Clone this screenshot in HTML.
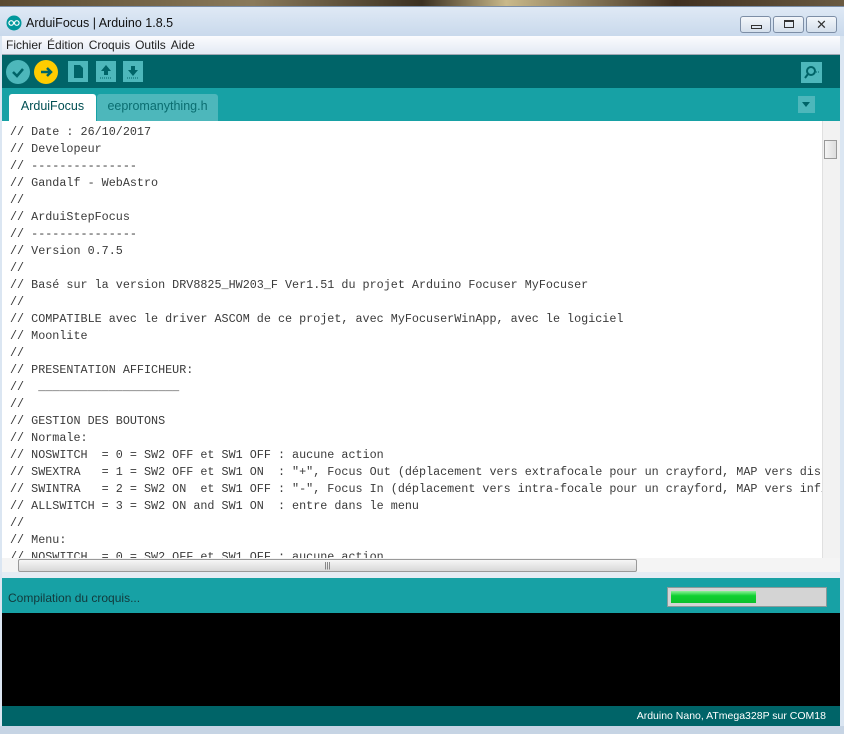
<!DOCTYPE html>
<html><head><meta charset="utf-8"><style>
*{margin:0;padding:0;box-sizing:border-box}
body{width:844px;height:734px;overflow:hidden;background:#dbe6f2;font-family:"Liberation Sans",sans-serif;position:relative}
.abs{position:absolute}
#desk{left:0;top:0;width:844px;height:6px;background:linear-gradient(90deg,#5a4a30,#8a7a5a 30%,#3b3020 50%,#c9b98a 60%,#403020 80%,#6a5a40)}
#title{left:0;top:6px;width:844px;height:30px;background:linear-gradient(#dfe9f5,#c9d9ec);border-top:1px solid #7a8ea8}
#title .t{left:26px;top:9px;font-size:12.5px;color:#111}
.wb{top:9px;height:17px;border:1px solid #7d8ea6;border-radius:3px;background:linear-gradient(#f4f7fb,#d4dfec)}
#menu{left:2px;top:36px;width:838px;height:19px;background:linear-gradient(#fbfcfe,#e3eaf4);border-bottom:1px solid #a0a8b4;font-size:12px;color:#222}
#menu span{margin-left:4px;margin-right:1px;line-height:18px}
#tool{left:2px;top:55px;width:838px;height:33px;background:#006468}
#tabs{left:2px;top:88px;width:838px;height:33px;background:#17a1a5}
#editor{left:2px;top:121px;width:838px;height:451px;background:#fff;overflow:hidden}
pre{position:absolute;left:8px;top:3px;font-family:"Liberation Mono",monospace;font-size:11.75px;line-height:17px;color:#3a3a3a}
#status{left:2px;top:578px;width:838px;height:35px;background:#17a1a5}
#console{left:2px;top:613px;width:838px;height:93px;background:#000}
#board{left:2px;top:706px;width:838px;height:20px;background:#006468;color:#fff;font-size:10.5px;text-align:right;padding-right:14px;line-height:20px}
</style></head><body>
<div class="abs" id="desk"></div>
<div class="abs" id="title">
<svg class="abs" style="left:6px;top:8px" width="16" height="16"><circle cx="8" cy="8" r="7.5" fill="#00979c"/><circle cx="5.2" cy="8" r="2.3" fill="none" stroke="#fff" stroke-width="1.2"/><circle cx="10.8" cy="8" r="2.3" fill="none" stroke="#fff" stroke-width="1.2"/></svg>
<div class="abs t">ArduiFocus | Arduino 1.8.5</div>
<div class="abs wb" style="left:740px;width:31px"><div class="abs" style="left:10px;top:8px;width:11px;height:4px;border:1px solid #333"></div></div>
<div class="abs wb" style="left:773px;width:31px"><div class="abs" style="left:10px;top:3px;width:10px;height:8px;border:1px solid #333;border-top-width:2px"></div></div>
<div class="abs wb" style="left:806px;width:31px;text-align:center;font-size:13px;line-height:15px;color:#333">✕</div>
</div>
<div class="abs" id="menu"><span>Fichier</span><span>Édition</span><span>Croquis</span><span>Outils</span><span>Aide</span></div>
<div class="abs" id="tool">
<svg class="abs" style="left:4px;top:5px" width="140" height="24">
<circle cx="12" cy="12" r="12" fill="#4db7bb"/><path d="M7 12l4 4 6-7" stroke="#006468" stroke-width="2.5" fill="none"/>
<circle cx="40" cy="12" r="12" fill="#ffcc00"/><path d="M35 12h9M41 8l4 4-4 4" stroke="#006468" stroke-width="2.5" fill="none"/>
<rect x="62" y="1" width="20" height="21" fill="#4db7bb"/><path d="M68 5h6l3 3v10h-9z" fill="#006468"/>
<rect x="90" y="1" width="20" height="21" fill="#4db7bb"/><path d="M100 5l-5 6h3v4h4v-4h3z" fill="#006468"/><path d="M94 18h12" stroke="#006468" stroke-dasharray="1 1"/>
<rect x="117" y="1" width="20" height="21" fill="#4db7bb"/><path d="M127 16l-5-6h3V6h4v4h3z" fill="#006468"/><path d="M121 18h12" stroke="#006468" stroke-dasharray="1 1"/>
</svg>
<svg class="abs" style="left:799px;top:7px" width="21" height="21"><rect width="21" height="21" fill="#4db7bb"/><circle cx="10" cy="9" r="4" fill="none" stroke="#006468" stroke-width="2"/><path d="M7 12l-3 4" stroke="#006468" stroke-width="2"/><path d="M15 10h3" stroke="#006468" stroke-dasharray="1 1"/></svg>
</div>
<div class="abs" id="tabs">
<div class="abs" style="left:7px;top:6px;width:87px;height:27px;background:#fff;border-radius:3px 3px 0 0;font-size:12.5px;color:#004f53;text-align:center;line-height:25px">ArduiFocus</div>
<div class="abs" style="left:95px;top:6px;width:121px;height:27px;background:#4db7bb;border-radius:3px 3px 0 0;font-size:12.5px;color:#0a6d70;text-align:center;line-height:25px">eepromanything.h</div>
<div class="abs" style="left:796px;top:8px;width:17px;height:17px;background:#4db7bb"><div class="abs" style="left:4px;top:6px;border-left:4.5px solid transparent;border-right:4.5px solid transparent;border-top:5px solid #006468"></div></div>
</div>
<div class="abs" id="editor">
<pre>// Date : 26/10/2017
// Developeur
// ---------------
// Gandalf - WebAstro
//
// ArduiStepFocus
// ---------------
// Version 0.7.5
//
// Basé sur la version DRV8825_HW203_F Ver1.51 du projet Arduino Focuser MyFocuser
//
// COMPATIBLE avec le driver ASCOM de ce projet, avec MyFocuserWinApp, avec le logiciel
// Moonlite
//
// PRESENTATION AFFICHEUR:
//  ____________________
//
// GESTION DES BOUTONS
// Normale:
// NOSWITCH  = 0 = SW2 OFF et SW1 OFF : aucune action
// SWEXTRA   = 1 = SW2 OFF et SW1 ON  : "+", Focus Out (déplacement vers extrafocale pour un crayford, MAP vers dist
// SWINTRA   = 2 = SW2 ON  et SW1 OFF : "-", Focus In (déplacement vers intra-focale pour un crayford, MAP vers infi
// ALLSWITCH = 3 = SW2 ON and SW1 ON  : entre dans le menu
//
// Menu:
// NOSWITCH  = 0 = SW2 OFF et SW1 OFF : aucune action</pre>
<div class="abs" style="left:820px;top:0;width:18px;height:437px;background:#f2f2f2;border-left:1px solid #e0e0e0"></div>
<div class="abs" style="left:822px;top:19px;width:13px;height:19px;border:1px solid #999;background:linear-gradient(90deg,#f4f4f4,#ddd)"></div>
<div class="abs" style="left:0;top:437px;width:838px;height:14px;background:#f4f4f4"></div>
<div class="abs" style="left:16px;top:438px;width:619px;height:13px;border:1px solid #999;border-radius:2px;background:linear-gradient(#f6f6f6,#d8d8d8);font-size:8px;text-align:center;line-height:11px;color:#555">|||</div>
</div>
<div class="abs" style="left:2px;top:572px;width:838px;height:6px;background:#e4ecf4"></div>
<div class="abs" id="status">
<div class="abs" style="left:6px;top:13px;font-size:12px;color:#12393b">Compilation du croquis...</div>
<div class="abs" style="left:665px;top:9px;width:160px;height:20px;border:1px solid #8a9a9a;background:#d4d4d4"><div class="abs" style="left:3px;top:3px;width:85px;height:12px;background:linear-gradient(#8ef09a,#0ed030 40%,#0cc02c)"></div></div>
</div>
<div class="abs" id="console"></div>
<div class="abs" id="board">Arduino Nano, ATmega328P sur COM18</div>
<div class="abs" style="left:0;top:726px;width:844px;height:8px;background:#c6d4e4"></div>
</body></html>
